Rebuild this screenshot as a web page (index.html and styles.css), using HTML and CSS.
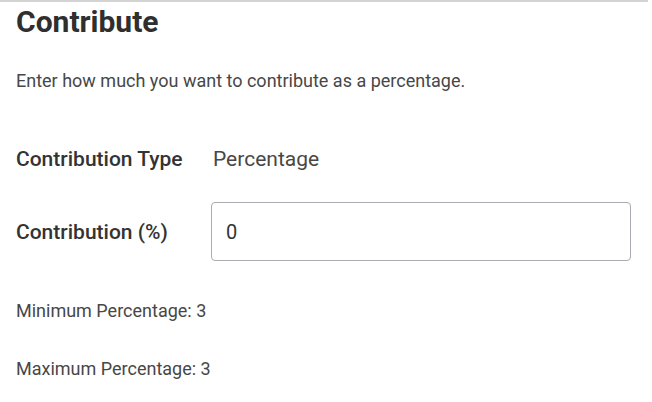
FILE: index.html
```html
<!DOCTYPE html>
<html>
<head>
<meta charset="utf-8">
<link rel="stylesheet" href="styles.css">
</head>
<body>
<div class="topline"></div>
<main class="panel">
  <h1 class="title">Contribute</h1>
  <p class="desc">Enter how much you want to contribute as a percentage.</p>
  <div class="row row-type">
    <span class="label">Contribution Type</span>
    <span class="value">Percentage</span>
  </div>
  <div class="row row-input">
    <label class="label" for="pct">Contribution (%)</label>
    <input class="field" id="pct" type="text" value="0">
  </div>
  <p class="note note-min">Minimum Percentage: 3</p>
  <p class="note note-max">Maximum Percentage: 3</p>
</main>
</body>
</html>
```
FILE: styles.css
```css
html, body {
  margin: 0;
  padding: 0;
  background: #fff;
}
body {
  font-family: Roboto, "Liberation Sans", sans-serif;
  color: #333;
  width: 652px;
  height: 402px;
  overflow: hidden;
}
.topline {
  height: 2px;
  width: 648px;
  background: #d4d4d4;
}
.panel {
  padding: 2px 16px 0;
}
.title {
  margin: 0;
  font-size: 30px;
  line-height: 36px;
  font-weight: 700;
  color: #2f2f2f;
}
.desc {
  margin: 30px 0 0;
  font-size: 18px;
  line-height: 22px;
  color: #474747;
}
.row {
  display: flex;
  align-items: center;
}
.row-type {
  margin-top: 54px;
}
.row-input {
  margin-top: 30px;
}
.label {
  flex: 0 0 195px;
  font-size: 21px;
  line-height: 26px;
  font-weight: 500;
  color: #333;
}
.value {
  padding-left: 2px;
  font-size: 21px;
  line-height: 26px;
  color: #474747;
}
.field {
  box-sizing: border-box;
  width: 420px;
  height: 59px;
  margin: 0;
  border: 1px solid #a9adb1;
  border-radius: 4px;
  padding: 0 14px;
  font-family: Roboto, "Liberation Sans", sans-serif;
  font-size: 20px;
  color: #333;
  outline: none;
  background: #fff;
}
.note {
  margin: 0;
  font-size: 18px;
  line-height: 22px;
  color: #474747;
}
.note-min {
  margin-top: 39px;
}
.note-max {
  margin-top: 36px;
}
```
